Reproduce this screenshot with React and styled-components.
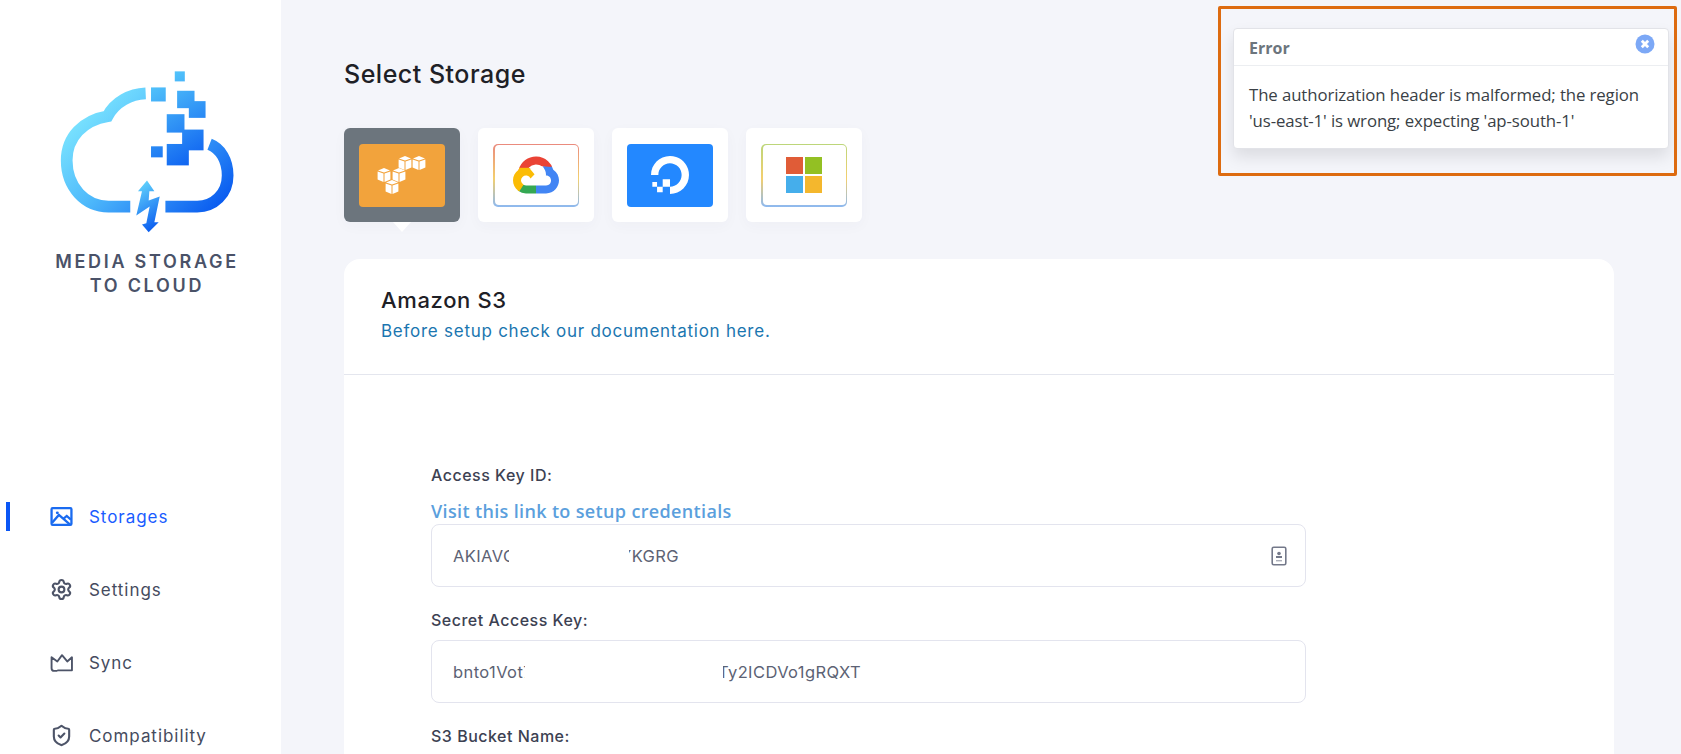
import React from 'react'
import styled, { createGlobalStyle } from 'styled-components'
import { Settings, ShieldCheck } from 'lucide-react'
import { SiDigitalocean } from 'react-icons/si'

const GlobalStyle = createGlobalStyle`
  html, body {
    margin: 0;
    height: 100%;
    overflow: hidden;
    background: #f4f5fa;
  }
  * {
    box-sizing: border-box;
  }
`

const Page = styled.div`
  display: grid;
  grid-template-columns: 281px 1fr;
  height: 754px;
  overflow: hidden;
  position: relative;
  font-family: Inter, 'Liberation Sans', sans-serif;
`

const Sidebar = styled.aside`
  background: #fff;
  display: flex;
  flex-direction: column;
  align-items: stretch;
  padding-top: 70px;
`

const LogoBlock = styled.div`
  display: flex;
  flex-direction: column;
  align-items: center;
  height: 410px;
  padding-left: 13px;
`

const LogoText = styled.div`
  margin-top: 16px;
  font-size: 18px;
  line-height: 24px;
  font-weight: 600;
  letter-spacing: 2.7px;
  color: #4a5268;
  text-align: center;
  white-space: nowrap;
`

const Nav = styled.nav`
  display: flex;
  flex-direction: column;
`

const NavItem = styled.a`
  position: relative;
  display: flex;
  align-items: center;
  height: 73px;
  padding-left: 50px;
  gap: 16px;
  font-size: 17px;
  letter-spacing: 0.95px;
  color: ${p => (p.$active ? '#1a5cff' : '#454b5e')};

  svg {
    flex: none;
    width: 23px;
    height: 23px;
    color: ${p => (p.$active ? '#1a6bf0' : '#4d5468')};
  }

  &::before {
    content: '';
    display: ${p => (p.$active ? 'block' : 'none')};
    position: absolute;
    left: 6px;
    top: 22px;
    width: 4px;
    height: 29px;
    background: #0a56f5;
  }
`

const Main = styled.main`
  padding: 56px 67px 0 63px;
  min-width: 0;
`

const Title = styled.h1`
  margin: 0 0 35px;
  font-size: 25px;
  line-height: 37px;
  font-weight: 500;
  letter-spacing: 0.5px;
  color: #1e2026;
`

const Tabs = styled.div`
  display: flex;
  gap: 18px;
  margin-bottom: 37px;
`

const Tab = styled.div`
  position: relative;
  width: 116px;
  height: 94px;
  display: flex;
  align-items: center;
  justify-content: center;
  border-radius: 6px;
  background: ${p => (p.$active ? '#6c757d' : '#fff')};
  box-shadow: 0 4px 14px rgba(60, 70, 110, 0.03);

  &::after {
    content: '';
    display: ${p => (p.$active ? 'block' : 'none')};
    position: absolute;
    left: 49px;
    bottom: -10px;
    border-left: 9px solid transparent;
    border-right: 9px solid transparent;
    border-top: 10px solid #fff;
  }
`

const TabLogo = styled.div`
  width: 86px;
  height: 63px;
  border-radius: 4px;
  display: flex;
  align-items: center;
  justify-content: center;
  background: ${p => p.$bg};
`

const BorderedLogo = styled.div`
  width: 86px;
  height: 63px;
  padding: 1.5px;
  border-radius: 5px;
  background: linear-gradient(180deg, ${p => p.$top} 0%, #f3cf6e 55%, #8db9f1 100%);
`

const BorderedInner = styled.div`
  width: 100%;
  height: 100%;
  background: #fff;
  border-radius: 4px;
  display: flex;
  align-items: center;
  justify-content: center;
`

const MicrosoftGrid = styled.div`
  display: grid;
  grid-template-columns: 17px 17px;
  grid-template-rows: 17px 17px;
  gap: 2px;
`

const MicrosoftCell = styled.div`
  background: ${p => p.$color};
`

const Card = styled.section`
  background: #fff;
  border-radius: 16px 16px 0 0;
  height: 495px;
  overflow: hidden;
`

const CardHeader = styled.header`
  height: 116px;
  padding: 27px 37px 0;
  border-bottom: 1px solid #e4e6ee;
`

const CardTitle = styled.h2`
  margin: 0;
  font-size: 22px;
  line-height: 28px;
  font-weight: 500;
  letter-spacing: 0.65px;
  color: #1e2026;
`

const DocLink = styled.a`
  display: block;
  margin-top: 5px;
  font-size: 17px;
  line-height: 24px;
  letter-spacing: 0.74px;
  color: #1b76b0;
`

const Form = styled.div`
  width: 962px;
  padding: 89px 0 0 87px;
`

const Label = styled.label`
  display: block;
  font-size: 16px;
  line-height: 22px;
  font-weight: 500;
  letter-spacing: 0.5px;
  color: #3c4152;
`

const CredentialLink = styled.a`
  display: block;
  margin: 13px 0 1px;
  font-family: 'Open Sans', 'Noto Sans', sans-serif;
  font-size: 18px;
  line-height: 24px;
  font-weight: 600;
  letter-spacing: 0.35px;
  color: #5b9fdd;
`

const Field = styled.div`
  display: flex;
  align-items: center;
  height: 63px;
  margin-top: ${p => p.$mt || 0}px;
  margin-bottom: 22px;
  padding: 0 18px 0 21px;
  border: 1px solid #e3e4ee;
  border-radius: 8px;
  font-size: 16.5px;
  letter-spacing: 0.4px;
  color: #5c6274;
  white-space: nowrap;
`

const FieldPart = styled.span`
  display: flex;
  justify-content: ${p => (p.$end ? 'flex-end' : 'flex-start')};
  flex: none;
  width: ${p => p.$w}px;
  margin-left: ${p => p.$gap || 0}px;
  overflow: hidden;
`

const FieldIcon = styled.svg`
  margin-left: auto;
  width: 16px;
  height: 20px;
  color: #74798a;
`

const Toast = styled.div`
  position: absolute;
  left: 1233px;
  top: 28px;
  width: 436px;
  height: 121px;
  background: #fff;
  border: 1px solid #e2e3e8;
  border-radius: 4px;
  box-shadow: 0 8px 16px rgba(0, 0, 0, 0.1);
  font-family: 'Open Sans', 'Noto Sans', sans-serif;
`

const ToastHeader = styled.div`
  display: flex;
  align-items: center;
  justify-content: space-between;
  height: 37px;
  padding: 1px 13px 0 15px;
  border-bottom: 1px solid #eceef1;
  font-size: 16px;
  font-weight: 700;
  color: #6c757d;
`

const CloseIcon = styled.svg`
  width: 20px;
  height: 20px;
  margin-top: -7px;
`

const ToastBody = styled.div`
  padding: 16px 15px;
  font-size: 16.8px;
  line-height: 26px;
  letter-spacing: -0.1px;
  color: #3a3f46;
`

const Highlight = styled.div`
  position: absolute;
  left: 1218px;
  top: 6px;
  width: 459px;
  height: 170px;
  border: 3px solid #dd6b10;
  border-radius: 2px;
  pointer-events: none;
`

function CloudLogo() {
  return (
    <svg width="174" height="164" viewBox="180 90 520 490">
      <defs>
        <linearGradient id="cloudGrad" gradientUnits="userSpaceOnUse" x1="260" y1="170" x2="620" y2="530">
          <stop offset="0" stopColor="#7fe8ff" />
          <stop offset="0.45" stopColor="#4db8fb" />
          <stop offset="1" stopColor="#0a5cf0" />
        </linearGradient>
        <linearGradient id="pixelGrad" gradientUnits="userSpaceOnUse" x1="470" y1="110" x2="620" y2="370">
          <stop offset="0" stopColor="#55c8fb" />
          <stop offset="1" stopColor="#0a5cf0" />
        </linearGradient>
        <linearGradient id="boltGrad" x1="0.3" y1="0" x2="0.6" y2="1">
          <stop offset="0" stopColor="#62d4fc" />
          <stop offset="1" stopColor="#0a5cf0" />
        </linearGradient>
      </defs>
      <g fill="none" stroke="url(#cloudGrad)" strokeWidth="35">
        <path d="M436 160 C390 162 345 185 322 228 C250 240 200 290 200 360 C200 440 255 498 325 498 L390 498" />
        <path d="M495 498 L590 498 C640 498 681 460 681 405 C681 360 660 325 627 312" />
      </g>
      <g fill="url(#pixelGrad)">
        <rect x="523" y="94" width="30" height="30" />
        <rect x="452" y="142" width="44" height="42" />
        <rect x="530" y="152" width="52" height="52" />
        <rect x="565" y="183" width="50" height="50" />
        <rect x="499" y="222" width="53" height="55" />
        <rect x="545" y="268" width="64" height="62" />
        <rect x="499" y="311" width="66" height="64" />
        <rect x="452" y="318" width="35" height="33" />
      </g>
      <polygon
        fill="url(#boltGrad)"
        points="440,420 462,452 447,452 445,480 478,468 462,545 475,545 445,575 425,552 438,548 448,498 408,525 425,452 413,452"
      />
    </svg>
  )
}

function Cube({ x, y }) {
  return (
    <g transform={`translate(${x} ${y})`} fill="#fff">
      <polygon points="-6,-4.6 0,-7 6,-4.6 0,-2.4" />
      <polygon points="-6.4,-3.6 -0.5,-1.4 -0.5,7 -6.4,4.4" />
      <polygon points="6.4,-3.6 0.5,-1.4 0.5,7 6.4,4.4" />
    </g>
  )
}

function AwsLogo() {
  return (
    <svg width="86" height="63" viewBox="0 0 86 63">
      <Cube x={46} y={19} />
      <Cube x={60} y={19} />
      <Cube x={25} y={31} />
      <Cube x={40} y={31} />
      <Cube x={33} y={43} />
    </svg>
  )
}

const CLOUD_PATH = 'M12.19 2.38a9.344 9.344 0 0 0-9.234 6.893c.053-.02-.055.013 0 0-3.875 2.551-3.922 8.11-.247 10.941l.006-.007-.007.03a6.717 6.717 0 0 0 4.077 1.356h5.173l.03.03h5.192c6.687.053 9.376-8.605 3.835-12.35a9.365 9.365 0 0 0-2.821-4.552l-.043.043.006-.05A9.344 9.344 0 0 0 12.19 2.38zm-.358 4.146c1.244-.04 2.518.368 3.486 1.15a5.186 5.186 0 0 1 1.862 4.078v.518c3.53-.07 3.53 5.262 0 5.193h-5.193l-.008.009v-.04H6.785a2.59 2.59 0 0 1-1.067-.23h.001a2.597 2.597 0 1 1 3.437-3.437l3.013-3.012A6.747 6.747 0 0 0 8.11 8.24c.018-.01.04-.026.054-.023a5.186 5.186 0 0 1 3.67-1.69z'

function GoogleCloudLogo() {
  return (
    <svg width="46" height="46" viewBox="0 0 24 24">
      <defs>
        <clipPath id="gcRed"><polygon points="2,0 24,0 20,8.6 15,7.4 8.6,8.6 2.6,9.6" /></clipPath>
        <clipPath id="gcBlue"><polygon points="24,0 24,24 12,24 12,16 17,12 15.6,7.4 20,7.8" /></clipPath>
        <clipPath id="gcGreen"><polygon points="0,24 12,24 12,17 5.4,17 2.6,20" /></clipPath>
        <clipPath id="gcYellow"><polygon points="0,8.2 8.4,8.2 12.2,12.8 8.4,14.5 5.4,17.2 3,21 0,21" /></clipPath>
      </defs>
      <path d={CLOUD_PATH} fill="#ea4335" clipPath="url(#gcRed)" />
      <path d={CLOUD_PATH} fill="#4285f4" clipPath="url(#gcBlue)" />
      <path d={CLOUD_PATH} fill="#34a853" clipPath="url(#gcGreen)" />
      <path d={CLOUD_PATH} fill="#fbbc05" clipPath="url(#gcYellow)" />
    </svg>
  )
}

function PictureIcon() {
  return (
    <svg viewBox="0 0 22 22" fill="none" stroke="currentColor" strokeWidth="2.2">
      <rect x="1.5" y="3" width="19" height="16" rx="1" />
      <path d="M2 17 L8.5 9.5 L19.5 19" />
      <path d="M13 13 L16 10.5 L20 14" />
      <circle cx="7" cy="7.5" r="1.4" fill="currentColor" stroke="none" />
    </svg>
  )
}

function CrownIcon() {
  return (
    <svg viewBox="0 0 22 22" fill="none" stroke="currentColor" strokeWidth="1.8" strokeLinejoin="round">
      <path d="M7 19 H4 Q1.5 19 1.5 16.5 V6 L7 10 L11.5 4 L16.5 10 L21 6 V18.5 H7" />
    </svg>
  )
}

const storages = [
  { id: 'aws', active: true, logo: <TabLogo $bg="#f2a33c"><AwsLogo /></TabLogo> },
  {
    id: 'gcp',
    logo: <BorderedLogo $top="#ea8a7e"><BorderedInner><GoogleCloudLogo /></BorderedInner></BorderedLogo>,
  },
  { id: 'do', logo: <TabLogo $bg="#2388ff"><SiDigitalocean size={38} color="#fff" /></TabLogo> },
  {
    id: 'azure',
    logo: (
      <BorderedLogo $top="#bcd67a">
        <BorderedInner>
          <MicrosoftGrid>
            <MicrosoftCell $color="#e05c37" />
            <MicrosoftCell $color="#93c023" />
            <MicrosoftCell $color="#45aeeb" />
            <MicrosoftCell $color="#f4b72d" />
          </MicrosoftGrid>
        </BorderedInner>
      </BorderedLogo>
    ),
  },
]

export default function App() {
  return (
    <Page>
      <GlobalStyle />
      <Sidebar>
        <LogoBlock>
          <CloudLogo />
          <LogoText>MEDIA STORAGE<br />TO CLOUD</LogoText>
        </LogoBlock>
        <Nav>
          <NavItem $active><PictureIcon />Storages</NavItem>
          <NavItem><Settings strokeWidth={2.2} />Settings</NavItem>
          <NavItem><CrownIcon />Sync</NavItem>
          <NavItem><ShieldCheck strokeWidth={2.2} />Compatibility</NavItem>
        </Nav>
      </Sidebar>

      <Main>
        <Title>Select Storage</Title>
        <Tabs>
          {storages.map(s => (
            <Tab key={s.id} $active={s.active}>{s.logo}</Tab>
          ))}
        </Tabs>

        <Card>
          <CardHeader>
            <CardTitle>Amazon S3</CardTitle>
            <DocLink>Before setup check our documentation here.</DocLink>
          </CardHeader>
          <Form>
            <Label>Access Key ID:</Label>
            <CredentialLink>Visit this link to setup credentials</CredentialLink>
            <Field>
              <FieldPart $w={56}>AKIAVCQ</FieldPart>
              <FieldPart $w={50} $gap={120} $end>YKGRG</FieldPart>
              <FieldIcon viewBox="0 0 16 20" fill="none">
                <rect x="1.2" y="1.2" width="13.6" height="17.6" rx="1.5" stroke="currentColor" strokeWidth="1.6" />
                <circle cx="8" cy="7.5" r="1.8" fill="currentColor" />
                <rect x="5" y="10" width="6" height="2" fill="currentColor" />
                <rect x="5" y="14" width="6" height="1.4" fill="currentColor" opacity="0.6" />
              </FieldIcon>
            </Field>
            <Label>Secret Access Key:</Label>
            <Field $mt={9}>
              <FieldPart $w={72}>bnto1Vot7</FieldPart>
              <FieldPart $w={138} $gap={198} $end>Ty2ICDVo1gRQXT</FieldPart>
            </Field>
            <Label>S3 Bucket Name:</Label>
          </Form>
        </Card>
      </Main>

      <Toast>
        <ToastHeader>
          Error
          <CloseIcon viewBox="0 0 20 20">
            <circle cx="10" cy="10" r="9.5" fill="#7ca8f6" />
            <path d="M6.8 6.8 L13.2 13.2 M13.2 6.8 L6.8 13.2" stroke="#fff" strokeWidth="2.8" />
          </CloseIcon>
        </ToastHeader>
        <ToastBody>
          The authorization header is malformed; the region 'us-east-1' is wrong; expecting 'ap-south-1'
        </ToastBody>
      </Toast>
      <Highlight />
    </Page>
  )
}
